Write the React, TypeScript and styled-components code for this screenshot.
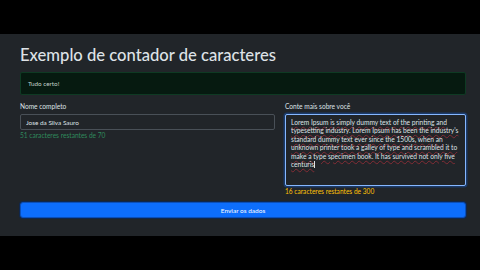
import styled, { createGlobalStyle } from "styled-components";

const LOREM =
    "Lorem Ipsum is simply dummy text of the printing and typesetting industry. Lorem Ipsum has been the industry's standard dummy text ever since the 1500s, when an unknown printer took a galley of type and scrambled it to make a type specimen book. It has survived not only five centuris";

function App() {
    const nome = "Jose da Silva Sauro";
    return <>
        <GlobalStyle />
        <Letterbox>
            <Page>
                <Title>Exemplo de contador de caracteres</Title>
                <Alert>Tudo certo!</Alert>
                <Row>
                    <Col>
                        <Label>Nome completo</Label>
                        <Input defaultValue={nome} />
                        <Help $tone="ok">{70 - nome.length} caracteres restantes de 70</Help>
                    </Col>
                    <Col>
                        <Label>Conte mais sobre você</Label>
                        <TextArea>
                            <Spell>{LOREM}</Spell><Caret />
                        </TextArea>
                        <Help $tone="warn">16 caracteres restantes de 300</Help>
                    </Col>
                </Row>
                <Button>Enviar os dados</Button>
            </Page>
        </Letterbox>
    </>;
}

const GlobalStyle = createGlobalStyle`
    html, body {
        margin: 0;
        background: #000;
    }
    body {
        font-family: Lato, "Noto Sans", sans-serif;
        color: #dee2e6;
    }
`;

const Letterbox = styled.div`
    display: flex;
    flex-direction: column;
    justify-content: center;
    width: 480px;
    height: 270px;
`;

const Page = styled.main`
    height: 202px;
    box-sizing: border-box;
    background: #212529;
    padding: 10px 14px 0 20px;
`;

const Title = styled.h1`
    margin: 0;
    font-size: 16.6px;
    font-weight: 500;
    line-height: 22px;
    color: #dee2e6;
`;

const Alert = styled.div`
    margin-top: 6px;
    height: 23px;
    box-sizing: border-box;
    display: flex;
    align-items: center;
    padding: 0 7px;
    background: #061a10;
    border: 1px solid #0e3a23;
    border-radius: 2px;
    font-size: 6.3px;
    color: #c3d3c9;
`;

const Row = styled.div`
    display: grid;
    grid-template-columns: 255px 181px;
    column-gap: 10px;
    margin-top: 6px;
`;

const Col = styled.div`
    display: flex;
    flex-direction: column;
`;

const Label = styled.label`
    font-size: 6.6px;
    line-height: 10px;
    margin-bottom: 3px;
    color: #dee2e6;
`;

const Input = styled.input`
    height: 16px;
    box-sizing: border-box;
    padding: 0 5px;
    background: #212529;
    border: 1px solid #495057;
    border-radius: 2px;
    color: #dee2e6;
    font: 6.4px Lato, sans-serif;
    outline: none;
`;

const TextArea = styled.div`
    height: 72px;
    box-sizing: border-box;
    padding: 3px 5px;
    background: #212529;
    border: 1px solid #86b7fe;
    border-radius: 2px;
    box-shadow: 0 0 0 1.5px rgba(13, 110, 253, 0.3);
    font-size: 6.65px;
    line-height: 8.4px;
    color: #dee2e6;
    overflow: hidden;
`;

const Spell = styled.span`
    text-decoration: underline wavy rgba(200, 50, 60, 0.55);
    text-decoration-thickness: 0.5px;
    text-underline-offset: 1px;
`;

const Caret = styled.span`
    display: inline-block;
    width: 0.6px;
    height: 7px;
    background: #dee2e6;
    vertical-align: -1px;
`;

const Help = styled.div<{ $tone: "ok" | "warn" }>`
    font-size: 6.6px;
    line-height: 9px;
    margin-top: 1px;
    color: ${p => p.$tone === "ok" ? "#2f8a5c" : "#ffc107"};
`;

const Button = styled.button`
    display: block;
    width: 446px;
    height: 16px;
    margin-top: 6px;
    padding: 0;
    background: #0d6efd;
    border: 1px solid #0b4fb8;
    border-radius: 3px;
    box-shadow: 0 0 0 1px rgba(10, 40, 90, 0.8);
    color: #fff;
    font: 6.5px Lato, sans-serif;
    cursor: pointer;
`;

export default App;
